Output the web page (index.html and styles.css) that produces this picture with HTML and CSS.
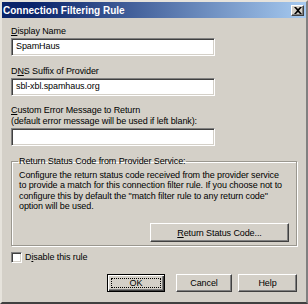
FILE: index.html
```html
<!DOCTYPE html>
<html lang="en">
<head>
    <meta charset="UTF-8">
    <title>Connection Filtering Rule</title>
    <link rel="stylesheet" href="styles.css">
</head>
<body>
    <div class="window">
        <div class="titlebar">
            <span class="title">Connection Filtering Rule</span>
            <span class="close-btn">
                <svg width="8" height="7" viewBox="0 0 8 7">
                    <path d="M0 0 L2 0 L4 2 L6 0 L8 0 L5 3.5 L8 7 L6 7 L4 5 L2 7 L0 7 L3 3.5 Z" fill="#000"/>
                </svg>
            </span>
        </div>

        <div class="content">
            <div class="field-label label-first"><u>D</u>isplay Name</div>
            <div class="textbox">SpamHaus</div>

            <div class="field-label">D<u>N</u>S Suffix of Provider</div>
            <div class="textbox">sbl-xbl.spamhaus.org</div>

            <div class="field-label label-tight"><u>C</u>ustom Error Message to Return<br>(default error message will be used if left blank):</div>
            <div class="textbox"></div>

            <fieldset class="group">
                <legend>Return Status Code from Provider Service:</legend>
                <p class="group-text">Configure the return status code received from the provider service<br>to provide a match for this connection filter rule. If you choose not to<br>configure this by default the "match filter rule to any return code"<br>option will be used.</p>
                <button class="btn btn-wide"><u>R</u>eturn Status Code...</button>
            </fieldset>

            <div class="check-row">
                <span class="checkbox"></span>
                <span>D<u>i</u>sable this rule</span>
            </div>

            <div class="actions">
                <button class="btn btn-default"><span class="focus">OK</span></button>
                <button class="btn btn-cancel">Cancel</button>
                <button class="btn btn-help">Help</button>
            </div>
        </div>
    </div>
</body>
</html>
```

FILE: styles.css
```css
* {
    box-sizing: border-box;
}

body {
    margin: 0;
    font-family: 'Liberation Sans', Arial, sans-serif;
    font-size: 9px;
    letter-spacing: -0.1px;
    color: #000;
    background: #d4d0c8;
}

.window {
    width: 308px;
    height: 304px;
    background: #d4d0c8;
    border: 2px solid;
    border-color: #e6e3dc #808080 #404040 #e6e3dc;
}

.titlebar {
    height: 16px;
    display: flex;
    align-items: center;
    justify-content: space-between;
    padding: 0 2px 0 1px;
    background: linear-gradient(to right, #0a246a 10%, #a6caf0);
}

.title {
    color: #fff;
    font-weight: bold;
    font-size: 10px;
    letter-spacing: 0;
}

.close-btn {
    width: 13px;
    height: 11px;
    display: flex;
    align-items: center;
    justify-content: center;
    background: #d4d0c8;
    border: 1px solid;
    border-color: #fff #404040 #404040 #fff;
    box-shadow: inset -1px -1px #808080;
}

.content {
    padding: 0 9px;
}

.field-label {
    line-height: 11px;
    margin-top: 10px;
}

.label-first {
    margin-top: 8px;
}

.label-tight {
    margin-top: 9px;
}

.textbox {
    width: 204px;
    height: 18px;
    margin-top: 1px;
    padding: 0 4px;
    line-height: 14px;
    background: #fff;
    border: 1px solid;
    border-color: #808080 #fff #fff #808080;
    box-shadow: inset 1px 1px #404040, inset -1px -1px #d4d0c8;
}

.group {
    margin: 10px 0 0;
    padding: 0 7px 3px;
    width: 286px;
    border: 1px solid #9a978f;
    box-shadow: inset 1px 1px #fff, 1px 1px #fff;
}

.group legend {
    padding: 0 1px;
    margin-left: -1px;
    line-height: 11px;
}

.group-text {
    margin: 3px 0 0;
    line-height: 10.33px;
    white-space: nowrap;
}

.btn {
    font-family: inherit;
    font-size: 9px;
    letter-spacing: inherit;
    color: #000;
    height: 19px;
    padding: 0;
    background: #d4d0c8;
    border: 1px solid;
    border-color: #fff #404040 #404040 #fff;
    box-shadow: inset -1px -1px #808080;
}

.btn-wide {
    display: block;
    width: 139px;
    margin: 12px 0 0 auto;
}

.check-row {
    display: flex;
    align-items: center;
    gap: 3px;
    margin-top: 6px;
    line-height: 11px;
}

.checkbox {
    width: 11px;
    height: 11px;
    background: #fff;
    border: 1px solid;
    border-color: #808080 #fff #fff #808080;
    box-shadow: inset 1px 1px #404040, inset -1px -1px #d4d0c8;
}

.actions {
    display: flex;
    justify-content: flex-end;
    gap: 6px;
    margin-top: 11px;
}

.actions .btn {
    height: 18px;
}

.btn-default {
    width: 58px;
    margin-right: 5px;
    border: 1px solid #000;
    box-shadow: inset 1px 1px #fff, inset -1px -1px #404040, inset -2px -2px #808080;
    padding: 3px;
}

.btn-default .focus {
    display: flex;
    align-items: center;
    justify-content: center;
    height: 100%;
    border: 1px dotted #000;
}

.btn-cancel {
    width: 56px;
}

.btn-help {
    width: 59px;
}
```
